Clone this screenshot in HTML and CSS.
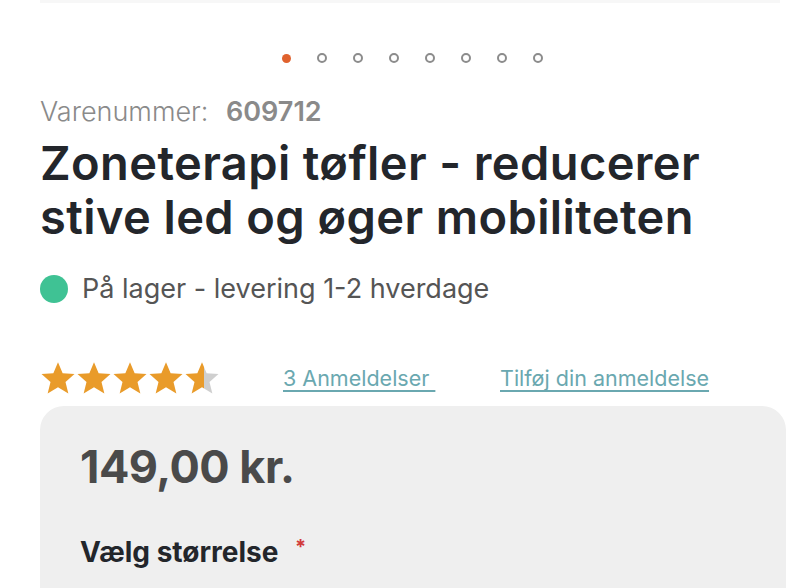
FILE: index.html
```html
<!DOCTYPE html>
<html lang="da">
<head>
  <meta charset="UTF-8">
  <meta name="viewport" content="width=device-width, initial-scale=1.0">
  <title>Zoneterapi tøfler</title>
  <link rel="stylesheet" href="styles.css">
</head>
<body>
  <!-- Bunden af billedgalleriet -->
  <div class="gallery-edge"></div>

  <!-- Prikker til galleriet -->
  <div class="dots">
    <span class="dot active"></span>
    <span class="dot"></span>
    <span class="dot"></span>
    <span class="dot"></span>
    <span class="dot"></span>
    <span class="dot"></span>
    <span class="dot"></span>
    <span class="dot"></span>
  </div>

  <div class="product-info">
    <p class="sku">Varenummer: <strong>609712</strong></p>
    <h1 class="title">Zoneterapi tøfler - reducerer stive led og øger mobiliteten</h1>

    <p class="stock"><span class="stock-dot"></span>På lager - levering 1-2 hverdage</p>

    <div class="rating-row">
      <div class="stars">
        <svg class="star" viewBox="0 0 24 24"><path d="M12 1.5l3.1 7.3 7.9.6-6 5.2 1.9 7.7L12 18.2l-6.9 4.1 1.9-7.7-6-5.2 7.9-.6z"/></svg>
        <svg class="star" viewBox="0 0 24 24"><path d="M12 1.5l3.1 7.3 7.9.6-6 5.2 1.9 7.7L12 18.2l-6.9 4.1 1.9-7.7-6-5.2 7.9-.6z"/></svg>
        <svg class="star" viewBox="0 0 24 24"><path d="M12 1.5l3.1 7.3 7.9.6-6 5.2 1.9 7.7L12 18.2l-6.9 4.1 1.9-7.7-6-5.2 7.9-.6z"/></svg>
        <svg class="star" viewBox="0 0 24 24"><path d="M12 1.5l3.1 7.3 7.9.6-6 5.2 1.9 7.7L12 18.2l-6.9 4.1 1.9-7.7-6-5.2 7.9-.6z"/></svg>
        <svg class="star" viewBox="0 0 24 24">
          <defs>
            <linearGradient id="half">
              <stop offset="55%" stop-color="#e99b2a"/>
              <stop offset="55%" stop-color="#cfcfcf"/>
            </linearGradient>
          </defs>
          <path fill="url(#half)" d="M12 1.5l3.1 7.3 7.9.6-6 5.2 1.9 7.7L12 18.2l-6.9 4.1 1.9-7.7-6-5.2 7.9-.6z"/>
        </svg>
      </div>
      <a href="#" class="review-link count">3 Anmeldelser </a>
      <a href="#" class="review-link">Tilføj din anmeldelse</a>
    </div>
  </div>

  <!-- Pris og valg -->
  <div class="buy-box">
    <p class="price">149,00 kr.</p>
    <p class="size-label">Vælg størrelse <span class="required">*</span></p>
  </div>
</body>
</html>
```

FILE: styles.css
```css
body {
  margin: 0;
  background-color: #fff;
  font-family: Inter, "Noto Sans", sans-serif;
  color: #23262b;
  overflow: hidden;
  height: 588px;
}
.gallery-edge {
  height: 3px;
  margin: 0 24px 0 40px;
  background-color: #f7f7f7;
}
.dots {
  display: flex;
  justify-content: center;
  align-items: center;
  gap: 26px;
  margin-top: 50px;
  margin-left: 20px;
}
.dot {
  width: 6px;
  height: 6px;
  border: 2px solid #8c8c8c;
  border-radius: 50%;
}
.dot.active {
  width: 9px;
  height: 9px;
  border: none;
  background-color: #e0622e;
}
.product-info {
  padding: 0 40px;
}
.sku {
  margin: 32px 0 0;
  font-size: 27px;
  font-weight: 300;
  color: #8a8a8a;
}
.sku strong {
  font-weight: 600;
  margin-left: 10px;
}
.title {
  margin: 8px 0 0;
  font-size: 47px;
  line-height: 54px;
  font-weight: 600;
  letter-spacing: 0.4px;
  color: #23262b;
}
.stock {
  display: flex;
  align-items: center;
  gap: 14px;
  margin: 28px 0 0;
  font-size: 27px;
  color: #555;
}
.stock-dot {
  width: 28px;
  height: 28px;
  border-radius: 50%;
  background-color: #3fc294;
}
.rating-row {
  display: flex;
  align-items: center;
  margin-top: 56px;
  height: 34px;
}
.stars {
  display: flex;
  width: 243px;
}
.star {
  width: 36px;
  height: 36px;
  fill: #e99b2a;
}
.review-link {
  font-size: 21.5px;
  color: #6aa8b0;
  text-decoration: underline;
  text-underline-offset: 4px;
  white-space: pre;
}
.review-link.count {
  width: 217px;
}
.buy-box {
  margin: 11px 18px 0 40px;
  padding: 33px 40px 40px;
  background-color: #efefef;
  border-radius: 24px 24px 0 0;
  height: 200px;
}
.price {
  margin: 0;
  font-size: 45px;
  font-weight: 700;
  color: #4a4a4a;
  letter-spacing: -0.5px;
}
.size-label {
  margin: 41px 0 0;
  font-size: 28px;
  font-weight: 700;
  color: #23262b;
}
.required {
  color: #d23a3a;
  font-size: 20px;
  vertical-align: top;
  margin-left: 10px;
}
```
